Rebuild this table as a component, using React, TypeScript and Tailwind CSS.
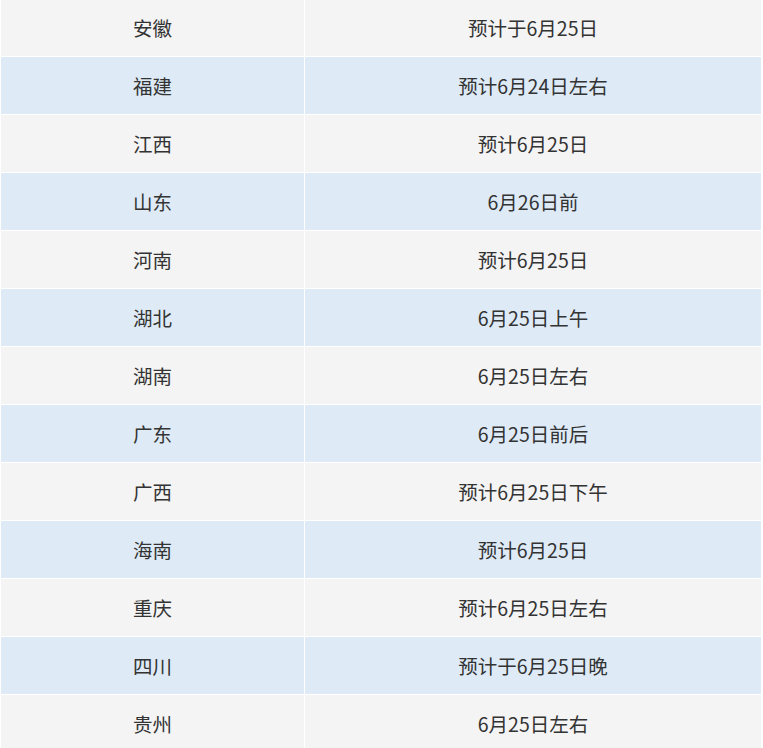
const rows: [string, string][] = [
  ["安徽", "预计于6月25日"],
  ["福建", "预计6月24日左右"],
  ["江西", "预计6月25日"],
  ["山东", "6月26日前"],
  ["河南", "预计6月25日"],
  ["湖北", "6月25日上午"],
  ["湖南", "6月25日左右"],
  ["广东", "6月25日前后"],
  ["广西", "预计6月25日下午"],
  ["海南", "预计6月25日"],
  ["重庆", "预计6月25日左右"],
  ["四川", "预计于6月25日晚"],
  ["贵州", "6月25日左右"],
];

export default function App() {
  return (
    <div className="w-[763px] h-[748px] overflow-hidden bg-white">
      <table
        className="w-[762px] -mt-[2px] border-collapse table-fixed text-[19.5px] text-[#333333]"
        style={{ fontFamily: '"Microsoft YaHei", "Noto Sans CJK SC", "Noto Sans", sans-serif' }}
      >
        <colgroup>
          <col className="w-[304px]" />
          <col />
        </colgroup>
        <tbody>
          {rows.map(([province, date], i) => (
            <tr key={province} className={i % 2 === 0 ? "bg-[#f4f4f4]" : "bg-[#deebf7]"}>
              <td className="h-[58px] border border-white text-center align-middle p-0">{province}</td>
              <td className="h-[58px] border border-white text-center align-middle p-0">{date}</td>
            </tr>
          ))}
        </tbody>
      </table>
    </div>
  );
}
